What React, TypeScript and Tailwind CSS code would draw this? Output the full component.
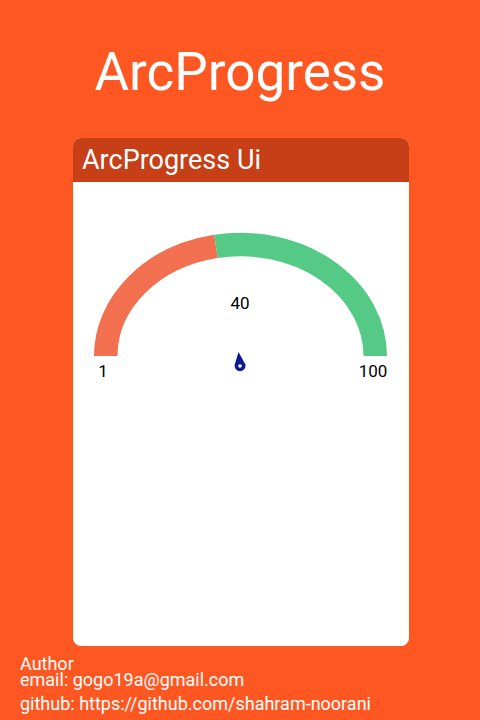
export default function App() {
  return (
    <div className="h-[720px] w-[480px] bg-[#ff5722] flex flex-col overflow-hidden font-['Roboto',sans-serif] text-white">
      {/* Title */}
      <h1 className="mt-[44px] text-center text-[53px] leading-[56px] font-normal">ArcProgress</h1>

      {/* Card */}
      <div className="mt-[38px] ml-[73px] w-[336px] h-[508px] bg-white rounded-lg overflow-hidden flex flex-col">
        <div className="h-[44px] bg-[#c63f16] px-[9px] text-[27px] leading-[44px]">ArcProgress Ui</div>
        <div className="flex-1">
          <svg width="336" height="230" viewBox="0 0 336 230">
            <path d="M 32.75 174 A 134.75 111.5 0 0 1 143 64.4" fill="none" stroke="#f26f50" strokeWidth="23.5" />
            <path d="M 143 64.4 A 134.75 111.5 0 0 1 302.25 174" fill="none" stroke="#55ca87" strokeWidth="23.5" />
            <text x="167" y="127" textAnchor="middle" fontSize="17" fill="#000" fontFamily="Roboto, sans-serif">40</text>
            <text x="30" y="195" textAnchor="middle" fontSize="17" fill="#000" fontFamily="Roboto, sans-serif">1</text>
            <text x="300" y="195" textAnchor="middle" fontSize="17" fill="#000" fontFamily="Roboto, sans-serif">100</text>
            <path d="M165.5 170 L161.6 183 A5.5 5.5 0 1 0 172.4 182.5 Z" fill="#0b1a8a" />
            <circle cx="167" cy="184" r="1.8" fill="#fff" />
          </svg>
        </div>
      </div>

      {/* Footer */}
      <div className="mt-[13.5px] pl-[20px] text-[18px]">
        <div className="leading-[8px] h-[8px]">Author</div>
        <div className="leading-[24px]">email: gogo19a@gmail.com</div>
        <div className="leading-[24px]">github: https://github.com/shahram-noorani</div>
      </div>
    </div>
  )
}
